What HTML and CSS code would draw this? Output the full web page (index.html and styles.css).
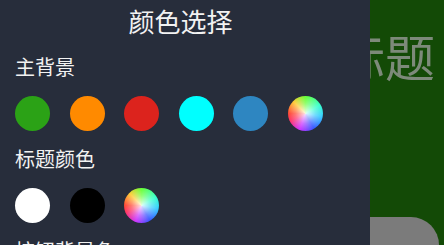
FILE: index.html
```html
<!DOCTYPE html>
<html lang="zh">
<head>
<meta charset="utf-8">
<link rel="stylesheet" href="styles.css">
</head>
<body>
<div class="page">
  <div class="bg-title">标题</div>
  <div class="bg-card"></div>
  <aside class="drawer">
    <h1 class="drawer-title">颜色选择</h1>
    <div class="section">
      <div class="label">主背景</div>
      <div class="swatches">
        <span class="dot green"></span>
        <span class="dot orange"></span>
        <span class="dot red"></span>
        <span class="dot cyan"></span>
        <span class="dot blue"></span>
        <span class="dot wheel"></span>
      </div>
    </div>
    <div class="section">
      <div class="label">标题颜色</div>
      <div class="swatches">
        <span class="dot white"></span>
        <span class="dot black"></span>
        <span class="dot wheel"></span>
      </div>
    </div>
    <div class="section">
      <div class="label">按钮背景色</div>
    </div>
  </aside>
</div>
</body>
</html>
```

FILE: styles.css
```css
html, body {
  margin: 0;
  padding: 0;
}
body {
  width: 444px;
  height: 245px;
  overflow: hidden;
  font-family: "Noto Sans CJK SC", "Noto Sans", sans-serif;
}
.page {
  position: relative;
  width: 444px;
  height: 245px;
  background: #134a06;
  display: flex;
  flex-direction: column;
}
.bg-title {
  display: flex;
  justify-content: flex-end;
  padding-right: 9px;
  margin-top: 28px;
  font-size: 50px;
  line-height: 54px;
  color: #7d8a7a;
}
.bg-card {
  margin-top: auto;
  margin-right: 5px;
  height: 28px;
  background: #7b7b7b;
  border-top-right-radius: 32px;
}
.drawer {
  position: absolute;
  left: 0;
  top: 0;
  bottom: 0;
  width: 370px;
  background: #272d3b;
  color: #f2f2f2;
  padding-left: 15px;
  box-sizing: border-box;
}
.drawer-title {
  margin: 8px 0 0 0;
  padding-right: 24px;
  font-size: 26px;
  line-height: 26px;
  font-weight: normal;
  text-align: center;
}
.section {
  margin-top: 23px;
}
.section + .section {
  margin-top: 18px;
}
.label {
  font-size: 20px;
  line-height: 20px;
}
.swatches {
  display: flex;
  gap: 19.5px;
  margin-top: 19px;
}
.dot {
  width: 35px;
  height: 35px;
  border-radius: 50%;
  display: block;
}
.green { background: #2ba216; }
.orange { background: #ff8a00; }
.red { background: #dc231d; }
.cyan { background: #00ffff; }
.blue { background: #2e86c1; }
.white { background: #ffffff; }
.black { background: #000000; }
.wheel {
  background:
    radial-gradient(circle, rgba(255,255,255,0.85) 0%, rgba(255,255,255,0.3) 40%, rgba(255,255,255,0) 70%),
    conic-gradient(from 0deg, #66ff33, #33ffcc 60deg, #33ccff 100deg, #3355ff 150deg, #cc33ff 200deg, #ff3366 245deg, #ff4433 270deg, #ffcc33 315deg, #66ff33 360deg);
}
```
